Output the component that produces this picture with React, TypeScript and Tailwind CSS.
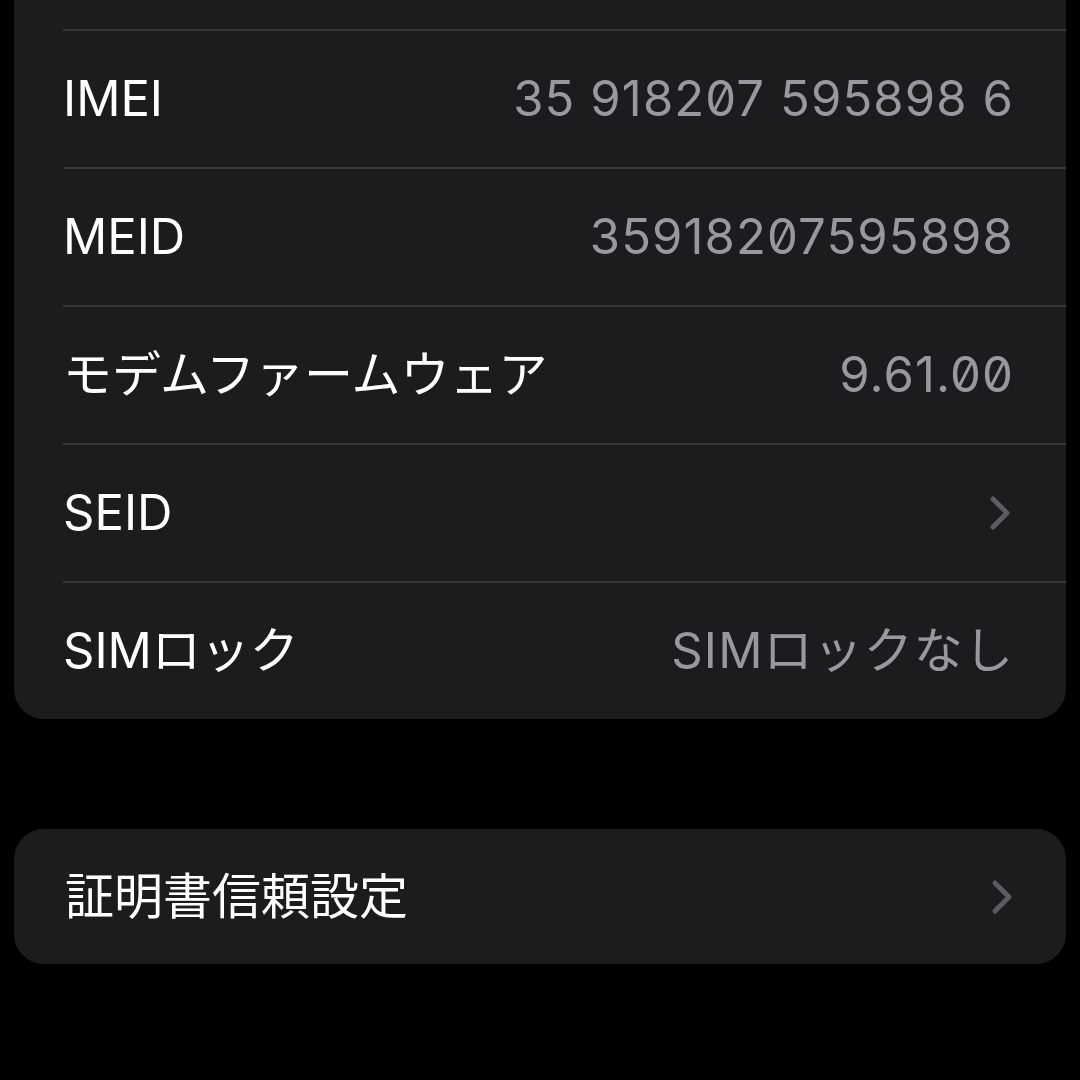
import React from 'react';

type Row = { label: string; value?: string; chevron?: boolean };

const rows: Row[] = [
  { label: 'IMEI', value: '35 918207 595898 6' },
  { label: 'MEID', value: '35918207595898' },
  { label: 'モデムファームウェア', value: '9.61.00' },
  { label: 'SEID', chevron: true },
  { label: 'SIMロック', value: 'SIMロックなし' },
];

const Chevron = () => (
  <svg width="26" height="38" viewBox="0 0 26 38" fill="none" className="shrink-0">
    <path d="M5 5 L19 19 L5 33" stroke="#5b5b60" strokeWidth="5" strokeLinecap="round" strokeLinejoin="round" />
  </svg>
);

const App: React.FC = () => {
  return (
    <div
      className="w-[1080px] h-[1080px] bg-black overflow-hidden"
      style={{ fontFamily: 'Inter, "Noto Sans CJK JP", sans-serif' }}
    >
      <div className="mx-[14px] bg-[#1c1c1e] rounded-b-[30px] pt-[29px]">
        {rows.map((row) => (
          <div key={row.label} className="pl-[49px]">
            <div className="h-[2px] bg-[#38383a]" />
            <div className="h-[136px] flex items-center justify-between pr-[52px] text-[49px]">
              <span className="text-white">{row.label}</span>
              {row.value && (
                <span className="text-[#98989e] slashed-zero tracking-[1.1px]">{row.value}</span>
              )}
              {row.chevron && <Chevron />}
            </div>
          </div>
        ))}
      </div>

      <div className="mx-[14px] mt-[110px] h-[135px] bg-[#1c1c1e] rounded-[30px] flex items-center justify-between pl-[51px] pr-[50px] text-[49px]">
        <span className="text-white">証明書信頼設定</span>
        <Chevron />
      </div>
    </div>
  );
};

export default App;
